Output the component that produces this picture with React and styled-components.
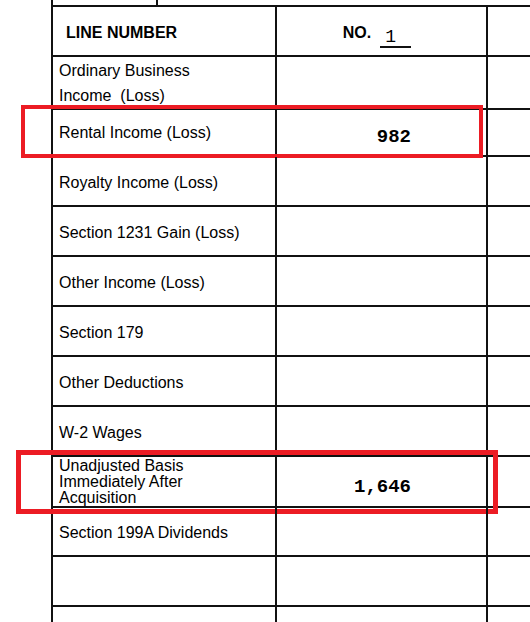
import styled, { createGlobalStyle } from 'styled-components';

const GlobalStyle = createGlobalStyle`
  html, body {
    margin: 0;
    padding: 0;
    background: #ffffff;
    overflow: hidden;
  }
  body {
    font-family: 'Liberation Sans', Arial, sans-serif;
    color: #000;
  }
`;

const LINE = '#111';

const Sheet = styled.div`
  margin-left: 51px;
  width: 640px;
  border-left: 2px solid ${LINE};
`;

const TopStrip = styled.div`
  height: 5px;
  display: flex;
`;

const TopCell = styled.div`
  width: 103px;
  border-right: 2px solid ${LINE};
`;

const Grid = styled.div`
  border-top: 2px solid ${LINE};
`;

const Row = styled.div`
  position: relative;
  display: grid;
  grid-template-columns: 224px 211px 1fr;
  height: 50px;
`;

const Cell = styled.div`
  box-sizing: border-box;
  border-right: 2px solid ${LINE};
  border-bottom: 2px solid ${LINE};
  display: flex;
  align-items: center;
`;

const HeadLabel = styled(Cell)`
  padding: 3px 0 0 13px;
  font-weight: bold;
  font-size: 16px;
`;

const HeadNo = styled(Cell)`
  justify-content: center;
  padding: 3px 9px 0 0;
  font-weight: bold;
  font-size: 16px;
`;

const NoField = styled.span`
  display: inline-block;
  width: 31px;
  margin-left: 9px;
  padding-left: 5px;
  box-sizing: border-box;
  border-bottom: 2px solid ${LINE};
  font-family: 'Liberation Mono', 'Courier New', monospace;
  font-weight: normal;
  font-size: 18px;
  line-height: 18px;
  transform: translateY(5px);
`;

const Label = styled(Cell)`
  padding: ${p => (p.$lines > 1 ? 1 : 3)}px 0 0 6px;
  font-size: 16px;
  line-height: ${p => (p.$lines > 2 ? '16px' : '25px')};
  white-space: pre-wrap;
`;

const Value = styled(Cell)`
  justify-content: flex-end;
  padding: ${p => p.$drop}px 75px 0 0;
  font-family: 'Liberation Mono', 'Courier New', monospace;
  font-weight: bold;
  font-size: 19px;
`;

const Spare = styled(Cell)`
  border-right: none;
`;

const Highlight = styled.div`
  position: absolute;
  pointer-events: none;
  box-sizing: border-box;
  border: ${p => p.$w}px solid #ec1c24;
`;

const rows = [
  { label: 'Ordinary Business\nIncome  (Loss)' },
  {
    label: 'Rental Income (Loss)',
    value: '982',
    drop: 12,
    mark: { left: -32, top: -2, width: 462, height: 53, w: 4 },
  },
  { label: 'Royalty Income (Loss)' },
  { label: 'Section 1231 Gain (Loss)' },
  { label: 'Other Income (Loss)' },
  { label: 'Section 179' },
  { label: 'Other Deductions' },
  { label: 'W-2 Wages' },
  {
    label: 'Unadjusted Basis\nImmediately After\nAcquisition',
    value: '1,646',
    drop: 11,
    mark: { left: -37, top: -7, width: 482, height: 64, w: 5 },
  },
  { label: 'Section 199A Dividends' },
  { label: '' },
  { label: '' },
];

export default function App() {
  return (
    <>
      <GlobalStyle />
      <Sheet>
        <TopStrip>
          <TopCell />
        </TopStrip>
        <Grid>
          <Row>
            <HeadLabel>LINE NUMBER</HeadLabel>
            <HeadNo>
              NO.<NoField>1</NoField>
            </HeadNo>
            <Spare />
          </Row>
          {rows.map((r, i) => (
            <Row key={i}>
              <Label $lines={r.label.split('\n').length}>{r.label}</Label>
              <Value $drop={r.drop || 0}>{r.value}</Value>
              <Spare />
              {r.mark && (
                <Highlight
                  $w={r.mark.w}
                  style={{
                    left: r.mark.left,
                    top: r.mark.top,
                    width: r.mark.width,
                    height: r.mark.height,
                  }}
                />
              )}
            </Row>
          ))}
        </Grid>
      </Sheet>
    </>
  );
}
